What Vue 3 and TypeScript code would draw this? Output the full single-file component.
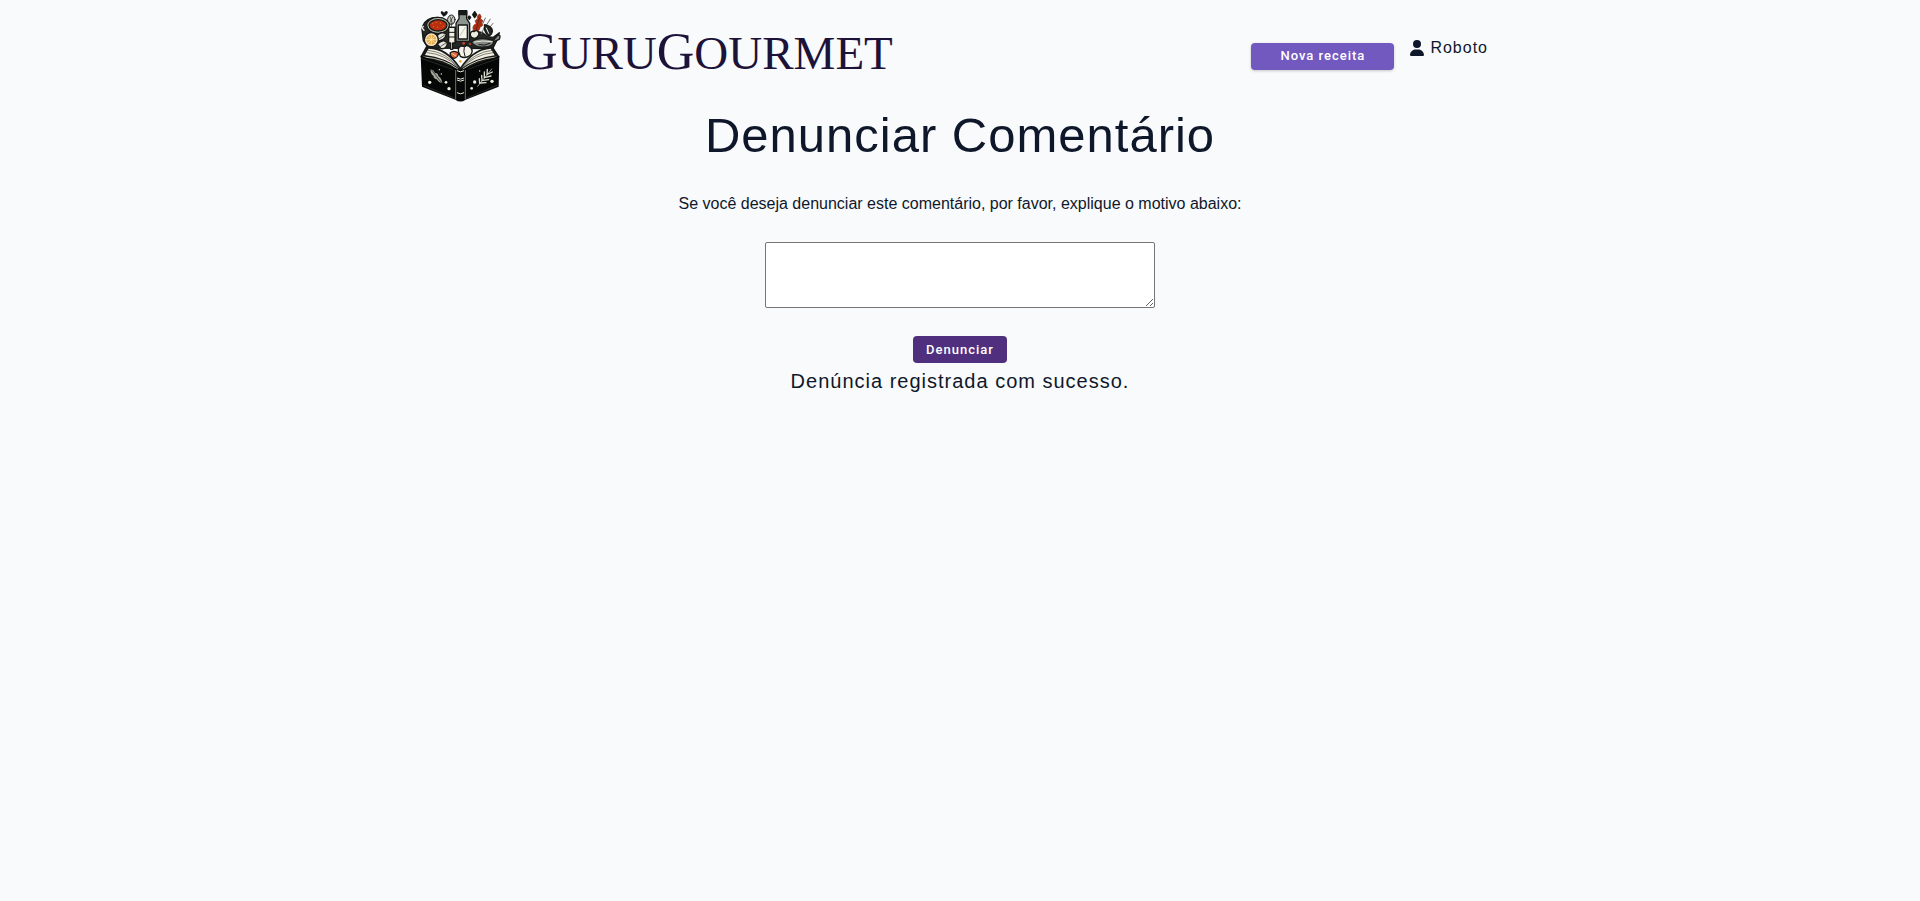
<script setup lang="ts">
import { ref } from 'vue'

const userName = ref('Roboto')
const reason = ref('')
const message = ref('Denúncia registrada com sucesso.')

function submitReport(): void {
  message.value = 'Denúncia registrada com sucesso.'
}
</script>

<template>
  <div class="page">
    <header class="header">
      <a class="brand" href="#" aria-label="GuruGourmet">
        <svg class="logo" viewBox="0 0 300 330" aria-hidden="true">
          <g stroke="#171917" stroke-width="4" stroke-linejoin="round" stroke-linecap="round">
            <!-- ingredients -->
            <path d="M36 88 Q40 62 66 54 Q96 48 112 68 L112 82 L136 82 L142 122 L176 122 L184 98 L190 92 L218 98 L232 110 L250 112 L268 98 L262 118 L248 146 L54 144 L40 122Z" fill="#252824" />
            <path d="M101 50 Q88 38 94 34 Q99 32 102 38 Q108 30 113 35 Q115 42 101 50Z" fill="#171917" stroke="none" />
            <ellipse cx="84" cy="76" rx="34" ry="24" fill="#bfc0b2" />
            <ellipse cx="84" cy="76" rx="27" ry="17" fill="#b9300f" />
            <path d="M68 71h1M78 67h1M91 70h1M99 79h1M82 82h1M70 80h1" stroke="#d9743a" stroke-width="3" />
            <path d="M42 91 Q34 84 40 79" fill="none" stroke="#eee" />
            <path d="M77 112 Q92 91 109 102 Q106 122 77 123Z M82 132 Q101 114 112 129 Q111 148 93 146Z" fill="#e6e6dc" />
            <path d="M84 119 L105 104 M92 139 L108 129" fill="none" stroke-width="2" />
            <circle cx="64" cy="119" r="21" fill="#f5e5c7" />
            <circle cx="64" cy="119" r="15" fill="#e7ad48" stroke="none" />
            <path d="M64 105v28M50 119h28M54 109l20 20M74 109l-20 20" stroke="#fff1c9" stroke-width="2" />
            <path d="M116 82h19v47h-7v19h-6v-19h-6z" fill="#f1f1e6" />
            <path d="M116 97h19M116 111h19" stroke-width="3" />
            <ellipse cx="124" cy="59" rx="11" ry="14" fill="#cccec5" stroke-width="3" />
            <path d="M120 50l7 20M129 50l-10 18M124 70v12" fill="none" stroke-width="2" />
            <path d="M147 33h23v23l9 14v54h-41V70l9-14z" fill="#8b948d" />
            <path d="M147 32h23v12h-23z" fill="#171917" />
            <path d="M145 75h27v42h-27z" fill="#f6f5eb" />
            <path d="M150 107l16-25" stroke="#a9aaa2" stroke-width="2" />
            <path d="M194 35l6 9-6 9-6-9z M177 48l5 4-4 6-4-5z" fill="#171917" />
            <path d="M189 87 Q187 75 199 71 Q191 59 203 58 Q199 47 209 42 Q217 50 211 57 Q224 60 215 69 Q224 77 211 80 Q207 96 197 98Z" fill="#ad2b11" stroke="#8d2b1a" stroke-width="2" />
            <path d="M197 96L208 54" stroke="#3c2019" stroke-width="2" />
            <path d="M226 54L219 70M241 57L226 80M249 70L234 88M222 84L214 102" fill="none" stroke="#6e726d" stroke-width="3" />
            <path d="M224 74Q246 79 247 91Q248 104 235 108Q220 94 224 74Z" fill="#242724" />
            <path d="M229 84L236 100" stroke="#efefe6" stroke-width="3" />
            <path d="M181 102Q183 91 192 95Q203 87 207 101Q204 114 193 115Q180 113 181 102Z" fill="#ecece0" />
            <path d="M184 126Q207 109 250 121L263 106Q274 103 268 118L251 125Q249 142 221 141Q195 143 184 126Z" fill="#858983" />
            <path d="M193 126Q220 120 246 125" fill="none" stroke="#e6e7de" stroke-width="3" />
            <path d="M207 134Q224 139 240 130" fill="none" stroke-width="3" />
            <path d="M145 154Q144 136 160 139Q174 132 183 144Q191 155 180 167Q165 177 151 169Z" fill="#f6f2e9" />
            <path d="M163 140Q159 155 165 169M166 140L169 131" fill="none" stroke-width="3" />
            <path d="M121 158Q132 149 146 160Q143 172 132 175Q118 171 121 158Z" fill="#e86939" />
            <path d="M126 161L138 168" stroke="#f6c4a6" stroke-width="3" />
          </g>
          <g fill="#d6421e"><circle cx="161" cy="130" r="4" /><circle cx="180" cy="132" r="3" /><circle cx="151" cy="184" r="4" fill="#eba332" /></g>
          <!-- open pages -->
          <path d="M31 170L48 139Q107 138 151 202Q190 142 249 140L269 171L151 213Z" fill="#171917" />
          <path d="M45 165L56 146Q109 148 147 205Q107 173 45 165Z M254 166L242 146Q190 151 155 205Q196 174 254 166Z" fill="#f4f0e4" />
          <path d="M51 158Q105 162 146 204M54 151Q108 156 148 205M249 158Q195 163 156 204M246 151Q194 157 155 203" fill="none" stroke="#43443d" stroke-width="2" />
          <path d="M40 171Q103 175 144 208M260 171Q199 176 158 208" fill="none" stroke="#c5c2b6" stroke-width="3" />
          <!-- cover -->
          <path d="M32 167L137 205Q151 214 166 205L268 167L266 260L167 299Q151 310 136 299L36 260Z" fill="#050706" />
          <path d="M137 210V298M166 210V298" stroke="#a8a9a0" stroke-width="2" />
          <path d="M141 212Q152 219 162 212M141 234Q152 241 162 234M141 240Q152 247 162 240M141 278Q152 285 162 278" fill="none" stroke="#eeece0" stroke-width="3" />
          <path d="M34 175L129 208M40 256L133 294M265 175L173 208M262 256L171 294" fill="none" stroke="#383b36" stroke-width="2" />
          <path d="M62 208Q72 210 75 219Q85 219 85 228Q95 234 97 250Q84 246 80 238Q69 238 71 229Q60 220 62 208Z" fill="#a4a59c" />
          <path d="M64 209L97 251M60 224L78 239M82 210L90 228" stroke="#171917" stroke-width="2" />
          <path d="M202 260L246 206" stroke="#d9dbcf" stroke-width="2" />
          <path d="M209 250L208 236M216 242L215 226M223 233L223 216M231 224L232 208M212 249L228 248M219 241L236 239M226 232L243 228M234 222L247 216" fill="none" stroke="#d9dbcf" stroke-width="4" stroke-linecap="round" />
          <g fill="#eeeede">
            <circle cx="59" cy="247" r="5" /><circle cx="108" cy="247" r="4" /><circle cx="117" cy="266" r="5" /><circle cx="88" cy="209" r="2" /><circle cx="94" cy="222" r="2" />
            <circle cx="194" cy="246" r="5" /><circle cx="246" cy="244" r="5" /><circle cx="185" cy="265" r="4" /><circle cx="209" cy="213" r="2" />
          </g>
        </svg>
        <span class="wordmark"><span class="initial">G</span>URU<span class="initial">G</span>OURMET</span>
      </a>
      <nav class="actions">
        <button type="button" class="button button-new">Nova receita</button>
        <a class="user" href="#">
          <svg class="user-icon" viewBox="0 0 448 512" aria-hidden="true">
            <path d="M224 256a128 128 0 1 0 0-256 128 128 0 1 0 0 256zm-45.700 48C79.800 304 0 383.800 0 482.300 0 498.700 13.300 512 29.700 512h388.600c16.400 0 29.700-13.300 29.700-29.700C448 383.800 368.200 304 269.700 304h-91.400z" />
          </svg>
          <span>{{ userName }}</span>
        </a>
      </nav>
    </header>

    <main class="content">
      <h1 class="title">Denunciar Comentário</h1>
      <form class="form" @submit.prevent="submitReport">
        <label class="label" for="reason">Se você deseja denunciar este comentário, por favor, explique o motivo abaixo:</label>
        <textarea id="reason" v-model="reason" class="reason" rows="4"></textarea>
        <button type="submit" class="button button-submit">Denunciar</button>
      </form>
      <p class="message" role="status">{{ message }}</p>
    </main>
  </div>
</template>

<style>
html {
  background: #f8fafc;
}

body {
  margin: 0;
}
</style>

<style scoped>
.page {
  box-sizing: border-box;
  max-width: 1100px;
  margin: 0 auto;
  color: #0f172a;
  font-family: "Liberation Sans", Arial, sans-serif;
  letter-spacing: 1px;
}

.header {
  display: flex;
  justify-content: space-between;
  align-items: flex-start;
}

.brand {
  display: flex;
  align-items: center;
  gap: 10px;
  color: #1d1238;
  text-decoration: none;
}

.logo {
  display: block;
  width: 100px;
  height: 110px;
}

.wordmark {
  padding-bottom: 6px;
  font-family: "Liberation Serif", "Times New Roman", serif;
  font-size: 47px;
  line-height: 56px;
  letter-spacing: 0;
}

.initial {
  font-size: 52px;
}

.actions {
  display: flex;
  align-items: flex-start;
  gap: 16px;
  padding: 36px 22px 0 0;
}

.button {
  box-sizing: border-box;
  height: 27px;
  padding: 0 12px;
  border: 0;
  border-radius: 4px;
  color: #fff;
  font-family: Roboto, "Liberation Sans", sans-serif;
  font-size: 13px;
  font-weight: 500;
  line-height: 20px;
  letter-spacing: 1px;
  cursor: pointer;
}

.button-new {
  width: 143px;
  margin-top: 7px;
  padding-bottom: 2px;
  background: #7259bf;
  box-shadow: 0 1px 3px rgb(0 0 0 / 20%);
}

.user {
  display: flex;
  align-items: center;
  gap: 6px;
  color: inherit;
  font-size: 16px;
  line-height: 24px;
  text-decoration: none;
}

.user-icon {
  width: 14px;
  height: 16px;
  fill: currentColor;
}

.content {
  display: flex;
  flex-direction: column;
  align-items: center;
  text-align: center;
}

.title {
  margin: 0;
  font-size: 49px;
  font-weight: 400;
  line-height: 50px;
}

.form {
  display: flex;
  flex-direction: column;
  align-items: center;
  width: 100%;
  margin-top: 32px;
}

.label {
  font-size: 16px;
  line-height: 24px;
  letter-spacing: 0;
}

.reason {
  box-sizing: border-box;
  width: 390px;
  max-width: 100%;
  height: 66px;
  margin: 26px 0 28px;
  border: 1px solid #767676;
  border-radius: 2px;
  background: #fff;
}

.button-submit {
  width: 94px;
  background: #502f7f;
}

.message {
  margin: 6px 0 0;
  font-size: 20px;
  line-height: 24px;
}
</style>
